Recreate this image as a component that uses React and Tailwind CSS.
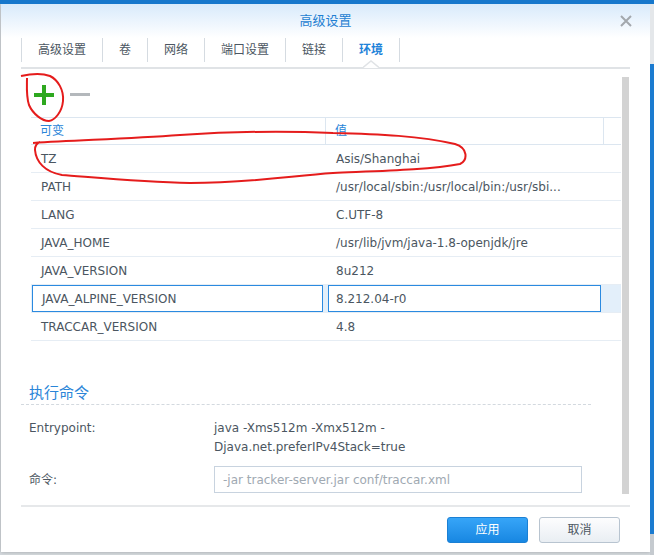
import React from 'react';

const FONT = { fontFamily: '"DejaVu Sans", "Noto Sans CJK SC", sans-serif' };

const tabs = ['高级设置', '卷', '网络', '端口设置', '链接', '环境'];

const rows = [
  ['TZ', 'Asis/Shanghai'],
  ['PATH', '/usr/local/sbin:/usr/local/bin:/usr/sbi...'],
  ['LANG', 'C.UTF-8'],
  ['JAVA_HOME', '/usr/lib/jvm/java-1.8-openjdk/jre'],
  ['JAVA_VERSION', '8u212'],
  ['JAVA_ALPINE_VERSION', '8.212.04-r0', true],
  ['TRACCAR_VERSION', '4.8'],
];

const App = () => {
  return (
    <div className="relative w-[654px] h-[555px] overflow-hidden bg-[#d5dade] border-t-4 border-[#1677cc] flex" style={FONT}>
      <div className="ml-[1px] w-[649px] h-[548px] bg-white flex flex-col shadow-[0_0_4px_rgba(0,0,0,0.25)]">
        {/* title */}
        <div className="h-[34px] relative flex items-center justify-center bg-gradient-to-b from-[#d8eafb] to-white">
          <span className="text-[13px] text-[#1f7fd2]">高级设置</span>
          <svg className="absolute right-[18px] top-[11px]" width="12" height="12" viewBox="0 0 12 12">
            <path d="M1 1 L11 11 M11 1 L1 11" stroke="#a3a8ad" strokeWidth="2" />
          </svg>
        </div>

        {/* tabs */}
        <div className="relative mx-[20px] h-[31px] border-b-2 border-[#e0e3e6] flex items-start">
          {tabs.map((t, i) => (
            <div
              key={t}
              className={`h-[24px] px-4 flex items-center text-[12px] border-l border-[#d5dbe1] ${
                i === tabs.length - 1 ? 'border-r text-[#1f83d9] font-semibold' : 'text-[#4b5661]'
              }`}
            >
              {t}
            </div>
          ))}
          <svg className="absolute left-[342px] top-[22px]" width="16" height="8" viewBox="0 0 16 8">
            <polygon points="0,8 8,1 16,8" fill="white" />
            <polyline points="0,7.5 8,1 16,7.5" fill="none" stroke="#e0e3e6" strokeWidth="1.5" />
          </svg>
        </div>

        {/* content */}
        <div className="h-[436px] flex overflow-hidden">
          <div className="w-[600px] ml-[20px] flex flex-col">
            <div className="h-[48px] pt-[4px] pl-[13px] flex items-center gap-[16px]">
              <svg width="20" height="20" viewBox="0 0 20 20">
                <rect x="8" y="0" width="4" height="20" fill="#2ea81f" />
                <rect x="0" y="8" width="20" height="4" fill="#2ea81f" />
              </svg>
              <div className="w-[20px] h-[3px] bg-[#b4b8bc] -mt-[2px]" />
            </div>

            <div className="ml-[10px] w-[590px] text-[12px] text-[#4b5661]">
              <div className="h-[28px] flex border-t border-b border-[#dce6f0] text-[#2a85d8]">
                <div className="w-[295px] pl-[9px] flex items-center border-r border-[#dce6f0]">可变</div>
                <div className="w-[278px] pl-[9px] flex items-center border-r border-[#dce6f0]">值</div>
                <div className="flex-1" />
              </div>
              {rows.map(([k, v, edit]) =>
                edit ? (
                  <div key={k} className="h-[28px] flex border-b border-[#e6edf4] bg-[#e3effa]">
                    <div className="ml-[1px] w-[291px] h-[27px] bg-white border border-[#2b8ae0] pl-[9px] flex items-center">{k}</div>
                    <div className="ml-[5px] w-[273px] h-[27px] bg-white border border-[#2b8ae0] pl-[7px] flex items-center">{v}</div>
                  </div>
                ) : (
                  <div key={k} className="h-[28px] flex border-b border-[#e6edf4]">
                    <div className="w-[295px] pl-[10px] flex items-center">{k}</div>
                    <div className="w-[278px] pl-[10px] flex items-center whitespace-nowrap">{v}</div>
                  </div>
                )
              )}
            </div>

            <div className="mt-[42px] w-[570px] h-[22px] pl-[8px] border-b border-dashed border-[#d3d9df] text-[15px] leading-[21px] text-[#2a85d8]">
              执行命令
            </div>

            <div className="mt-[14px] flex text-[12px] text-[#4b5661] leading-[19px]">
              <div className="w-[193px] pl-[8px]">Entrypoint:</div>
              <div>
                <div>java -Xms512m -Xmx512m -</div>
                <div>Djava.net.preferIPv4Stack=true</div>
              </div>
            </div>

            <div className="mt-[9px] flex items-center text-[12px] text-[#4b5661]">
              <div className="w-[193px] pl-[8px]">命令:</div>
              <div className="w-[368px] h-[27px] border border-[#c8d3df] pl-[8px] flex items-center text-[#a0a9b2]">
                -jar tracker-server.jar conf/traccar.xml
              </div>
            </div>
          </div>
          <div className="ml-[1px] mt-[8px] w-[7px] h-[417px] bg-[#d3d3d3]" />
        </div>

        {/* footer */}
        <div className="mx-[20px] border-t-2 border-[#e6e8ea] flex justify-end gap-[11px] pr-[10px] pt-[10px]">
          <button className="w-[81px] h-[26px] rounded-[3px] border border-[#1b80d4] bg-gradient-to-b from-[#36a5f8] to-[#1787e2] text-white text-[12px]">
            应用
          </button>
          <button className="w-[81px] h-[26px] rounded-[3px] border border-[#b8c4d0] bg-gradient-to-b from-[#fdfdfe] to-[#e9eef3] text-[#4b5661] text-[12px]">
            取消
          </button>
        </div>
      </div>
      <div className="flex-1 flex flex-col">
        <div className="h-[60px] bg-[#e4e7ea]" />
        <div className="h-[470px] bg-[#1b7bd0]" />
        <div className="flex-1 bg-[#c5cacf]" />
      </div>

      {/* red hand-drawn marks */}
      <svg className="absolute left-0 top-[-4px] pointer-events-none" width="654" height="555" viewBox="0 0 654 555">
        <path
          d="M21 76 C30 74, 42 73, 50 76 C58 80, 64 90, 63 101 C62 112, 55 120, 49 121 C42 121, 33 114, 29 105 C26 96, 27 85, 27 78"
          fill="none"
          stroke="#e51c1c"
          strokeWidth="2"
        />
        <path
          d="M33 143 C80 140, 125 139, 180 135 C240 131, 290 131, 333 133 C380 134, 420 136, 455 144 C468 148, 468 160, 460 164 C430 170, 380 171, 333 173 C290 176, 250 183, 190 183 C140 182, 90 177, 62 175 C45 172, 36 162, 35 150 C35 146, 37 143, 40 142"
          fill="none"
          stroke="#e51c1c"
          strokeWidth="2"
        />
      </svg>
    </div>
  );
};

export default App;
